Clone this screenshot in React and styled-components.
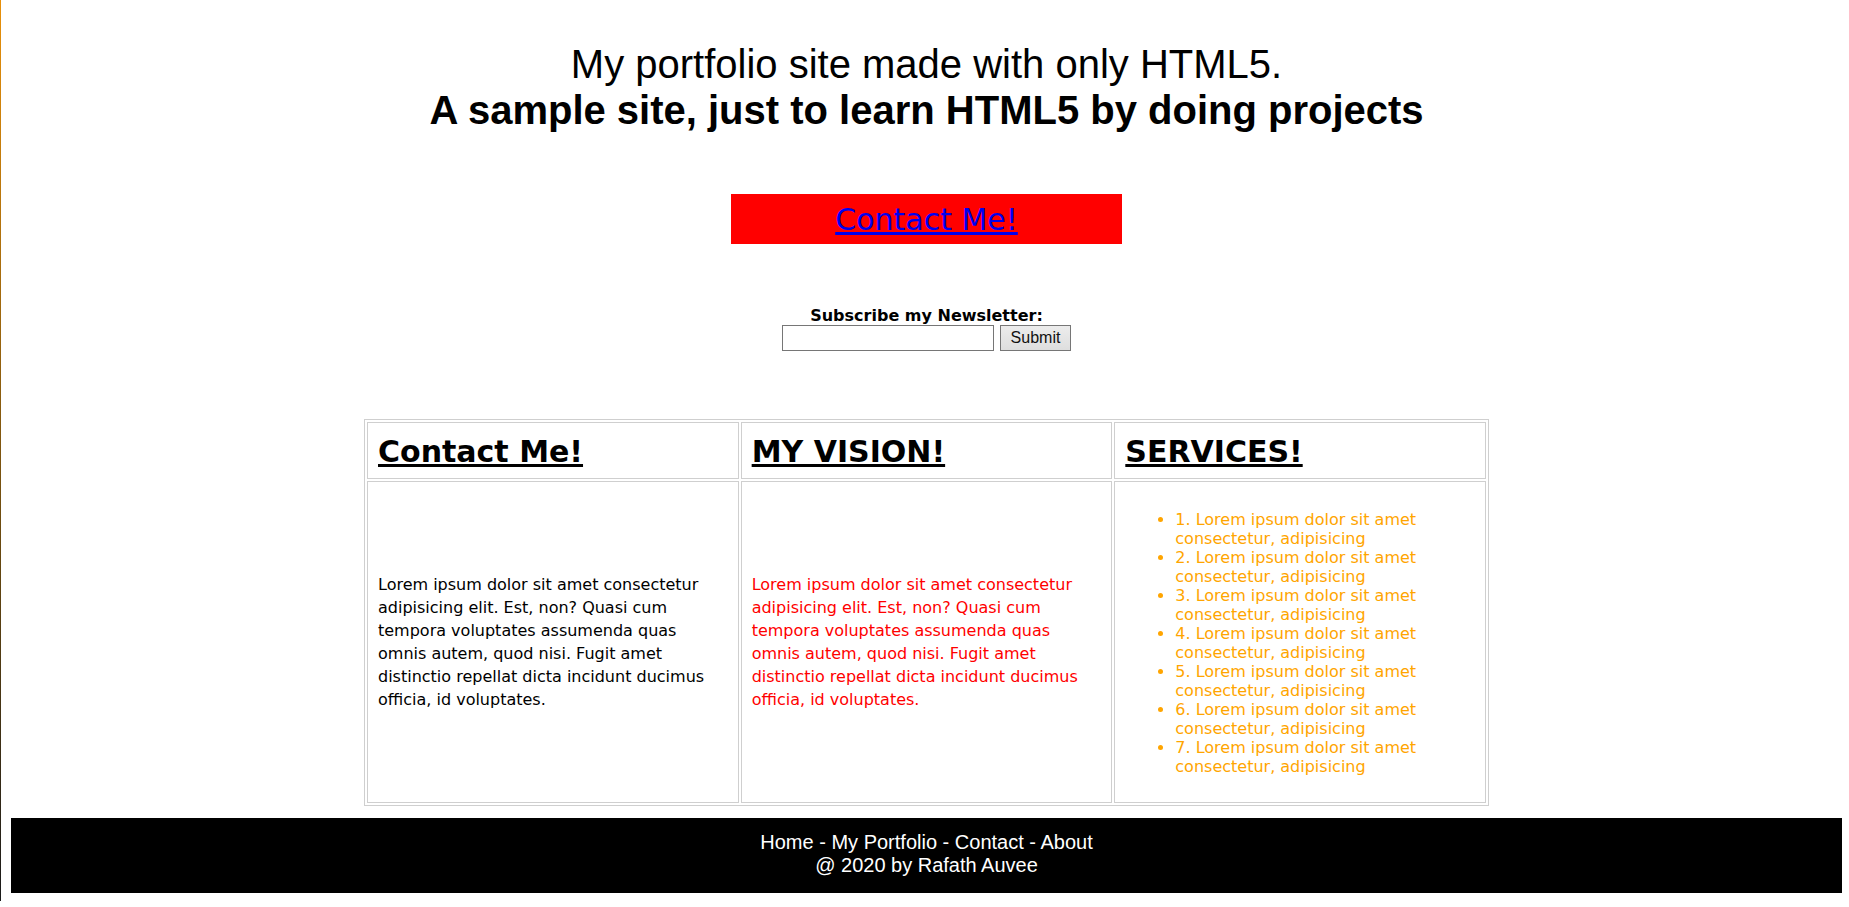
import styled, { createGlobalStyle } from "styled-components";

const GlobalStyle = createGlobalStyle`
  html {
    border-left: 1px solid;
    border-image: linear-gradient(#e8900a, #6a4a10 60%, #1a1a1a) 1;
    background: #ffffff;
  }
  body {
    margin: 8px 7px 8px 10px;
    font-family: "DejaVu Sans", Verdana, sans-serif;
    font-size: 16px;
    color: #000000;
  }
`;

const Header = styled.h1`
  margin: 33px 0 0;
  font-family: "Liberation Sans", Arial, sans-serif;
  font-size: 40px;
  font-weight: 400;
  line-height: 46px;
  text-align: center;

  strong {
    font-weight: 700;
  }
`;

const CtaRow = styled.div`
  display: flex;
  justify-content: center;
  margin-top: 61px;
`;

const CtaBox = styled.div`
  width: 391px;
  padding: 8px 0 7px;
  background-color: #ff0000;
  text-align: center;
`;

const CtaLink = styled.a`
  font-size: 30px;
  line-height: 35px;
  color: #0000ee;
  text-decoration: underline;
`;

const Newsletter = styled.form`
  margin-top: 62px;
  display: flex;
  flex-direction: column;
  align-items: center;
`;

const Label = styled.label`
  font-weight: 700;
  font-size: 16px;
  line-height: 19px;
`;

const InputRow = styled.div`
  display: flex;
  gap: 6px;
`;

const EmailInput = styled.input`
  box-sizing: border-box;
  width: 212px;
  height: 26px;
  margin: 0;
  border: 1px solid #767676;
  background: #ffffff;
`;

const SubmitBtn = styled.button`
  box-sizing: border-box;
  width: 71px;
  height: 26px;
  margin: 0;
  padding: 0;
  border: 1px solid #767676;
  background: linear-gradient(#ececec, #dedede);
  font-family: "Liberation Sans", Arial, sans-serif;
  font-size: 16px;
  color: #111111;
`;

const Table = styled.table`
  width: 1125px;
  margin: 68px auto 0;
  table-layout: fixed;
  border: 1px solid #cfcfcf;
  border-spacing: 2px;
`;

const Cell = styled.td`
  border: 1px solid #cfcfcf;
  padding: 10px;
  vertical-align: middle;
  color: ${(p) => p.$color || "#000000"};
`;

const Heading = styled.h2`
  margin: 0;
  padding-top: 2px;
  font-size: 30px;
  font-weight: 700;
  line-height: 33px;
  text-decoration: underline;
`;

const Text = styled.p`
  margin: 16px 0;
  line-height: 23px;
`;

const ServiceList = styled.ul`
  margin: 18px 0 16px;
  padding-left: 50px;
  line-height: 19px;
`;

const Footer = styled.footer`
  margin-top: 12px;
  padding: 13px 0 16px;
  background-color: #000000;
  color: #ffffff;
  font-family: "Liberation Sans", Arial, sans-serif;
  font-size: 20px;
  line-height: 23px;
  text-align: center;
`;

const FooterLink = styled.a`
  color: #ffffff;
  text-decoration: none;
`;

const lorem =
  "Lorem ipsum dolor sit amet consectetur adipisicing elit. Est, non? Quasi cum tempora voluptates assumenda quas omnis autem, quod nisi. Fugit amet distinctio repellat dicta incidunt ducimus officia, id voluptates.";

const services = [1, 2, 3, 4, 5, 6, 7];

function App() {
  return (
    <>
      <GlobalStyle />
      <Header>
        My portfolio site made with only HTML5.
        <br />
        <strong>A sample site, just to learn HTML5 by doing projects</strong>
      </Header>

      <CtaRow>
        <CtaBox>
          <CtaLink href="#contact">Contact Me!</CtaLink>
        </CtaBox>
      </CtaRow>

      <Newsletter onSubmit={(e) => e.preventDefault()}>
        <Label htmlFor="email">Subscribe my Newsletter:</Label>
        <InputRow>
          <EmailInput id="email" type="text" />
          <SubmitBtn type="submit">Submit</SubmitBtn>
        </InputRow>
      </Newsletter>

      <Table>
        <tbody>
          <tr>
            <Cell>
              <Heading>Contact Me!</Heading>
            </Cell>
            <Cell>
              <Heading>MY VISION!</Heading>
            </Cell>
            <Cell>
              <Heading>SERVICES!</Heading>
            </Cell>
          </tr>
          <tr>
            <Cell>
              <Text>{lorem}</Text>
            </Cell>
            <Cell $color="#ff0000">
              <Text>{lorem}</Text>
            </Cell>
            <Cell $color="#ffa500">
              <ServiceList>
                {services.map((n) => (
                  <li key={n}>
                    {n}. Lorem ipsum dolor sit amet consectetur, adipisicing
                  </li>
                ))}
              </ServiceList>
            </Cell>
          </tr>
        </tbody>
      </Table>

      <Footer>
        <FooterLink href="#home">Home</FooterLink> -{" "}
        <FooterLink href="#portfolio">My Portfolio</FooterLink> -{" "}
        <FooterLink href="#contact">Contact</FooterLink> -{" "}
        <FooterLink href="#about">About</FooterLink>
        <br />@ 2020 by Rafath Auvee
      </Footer>
    </>
  );
}

export default App;
